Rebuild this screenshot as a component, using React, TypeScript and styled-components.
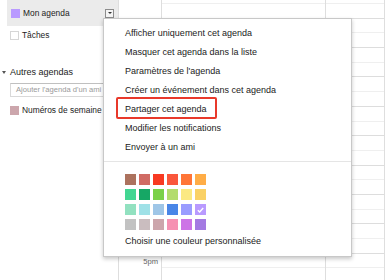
import React from "react";
import styled, {createGlobalStyle} from "styled-components";

const GlobalStyle = createGlobalStyle`
  html, body {
    margin: 0;
    padding: 0;
    background: #ffffff;
    font-family: "Liberation Sans", Arial, sans-serif;
    overflow: hidden;
  }
`;

const Page = styled.div`
  position: relative;
  display: flex;
  width: 385px;
  height: 280px;
  overflow: hidden;
  background: #ffffff;
`;

const Sidebar = styled.div`
  width: 118px;
  flex: none;
  display: flex;
  flex-direction: column;
`;

const CalendarRow = styled.div<{ $selected?: boolean; $gap?: number }>`
  display: flex;
  align-items: center;
  height: ${p => (p.$selected ? "26px" : "18px")};
  margin-top: ${p => p.$gap ?? 0}px;
  margin-left: 7px;
  padding-left: ${p => (p.$selected ? "4px" : "3px")};
  padding-right: 4px;
  background: ${p => (p.$selected ? "#ebebeb" : "transparent")};
`;

const ColorChip = styled.span<{ $color: string; $empty?: boolean }>`
  width: 9px;
  height: 9px;
  flex: none;
  box-sizing: border-box;
  background: ${p => p.$color};
  border: ${p => (p.$empty ? "1px solid #d6d6d6" : "none")};
`;

const CalendarLabel = styled.span`
  margin-left: 3px;
  font-size: 8.4px;
  color: #222;
  white-space: nowrap;
`;

const DropButton = styled.span`
  margin-left: auto;
  width: 9px;
  height: 9px;
  box-sizing: border-box;
  border: 1px solid #8c8c8c;
  background: #f4f4f4;
  display: flex;
  align-items: center;
  justify-content: center;

  &::after {
    content: "";
    border-left: 2px solid transparent;
    border-right: 2px solid transparent;
    border-top: 2px solid #333;
  }
`;

const SectionHeader = styled.div`
  display: flex;
  align-items: center;
  margin-top: 19px;
  height: 18px;
  padding-left: 2px;
  font-size: 9px;
  color: #222;

  &::before {
    content: "";
    margin-right: 4px;
    border-left: 2.5px solid transparent;
    border-right: 2.5px solid transparent;
    border-top: 3px solid #555;
  }
`;

const FriendInput = styled.div`
  margin: 2px 0 0 10px;
  height: 14px;
  width: 120px;
  box-sizing: border-box;
  border: 1px solid #d9d9d9;
  border-top-color: #c0c0c0;
  padding-left: 5px;
  font-size: 7.6px;
  line-height: 12px;
  color: #9a9a9a;
  white-space: nowrap;
  overflow: hidden;
`;

const Calendar = styled.div`
  flex: 1;
  display: flex;
  border-left: 1px solid #dedede;
`;

const TimeColumn = styled.div`
  width: 42px;
  flex: none;
  padding-top: 3px;
  border-right: 1px solid #dedede;
`;

const TimeSlot = styled.div`
  height: 14.7px;
  box-sizing: border-box;
  padding: 4px 3px 0 0;
  text-align: right;
  font-size: 7.6px;
  color: #666;
`;

const DayColumn = styled.div<{ $width?: number }>`
  width: ${p => (p.$width ? `${p.$width}px` : "auto")};
  flex: ${p => (p.$width ? "none" : "1")};
  padding-top: 3px;
  border-right: 1px solid #dedede;
`;

const Slot = styled.div<{ $hour: boolean }>`
  height: 14.7px;
  box-sizing: border-box;
  border-top: 1px solid ${p => (p.$hour ? "#dddddd" : "#efefef")};
`;

const Menu = styled.div`
  position: absolute;
  left: 103px;
  top: 18px;
  width: 249px;
  box-sizing: border-box;
  padding: 5px 0;
  background: #ffffff;
  border: 1px solid #c8c8c8;
  box-shadow: 0 2px 4px rgba(0, 0, 0, 0.22);
`;

const MenuItem = styled.div`
  position: relative;
  height: 19px;
  line-height: 19px;
  padding-left: 21px;
  font-size: 9px;
  color: #222;
  white-space: nowrap;
`;

const Highlight = styled.span`
  position: absolute;
  left: 12px;
  top: -3px;
  width: 101px;
  height: 22px;
  box-sizing: border-box;
  border: 2px solid #e8392b;
  border-radius: 2px;
`;

const Separator = styled.div`
  height: 1px;
  margin: 4px 0 0;
  background: #e5e5e5;
`;

const SwatchGrid = styled.div`
  display: grid;
  grid-template-columns: repeat(6, 11px);
  grid-auto-rows: 11px;
  column-gap: 3px;
  row-gap: 4px;
  margin: 12px 0 2px 21px;
`;

const Swatch = styled.div<{ $color: string }>`
  background: ${p => p.$color};
  display: flex;
  align-items: center;
  justify-content: center;
`;

const swatches = [
    "#ac725e", "#d06b64", "#f83a22", "#fa573c", "#ff7537", "#ffad46",
    "#42d692", "#16a765", "#7bd148", "#b3dc6c", "#fbe983", "#fad165",
    "#92e1c0", "#9fe1e7", "#9fc6e7", "#4986e7", "#9a9cff", "#b99aff",
    "#c2c2c2", "#cabdbf", "#cca6ac", "#f691b2", "#cd74e6", "#a47ae2",
];

const menuItems = [
    "Afficher uniquement cet agenda",
    "Masquer cet agenda dans la liste",
    "Paramètres de l'agenda",
    "Créer un événement dans cet agenda",
    "Partager cet agenda",
    "Modifier les notifications",
    "Envoyer à un ami",
];

// only the label below the open menu is visible
const timeLabels: Record<number, string> = {17: "5pm"};

export default function App() {
    const slots = [];
    for (let i = 0; i < 19; i++) {
        slots.push(i);
    }

    return (
        <Page>
            <GlobalStyle/>
            <Sidebar>
                <CalendarRow $selected>
                    <ColorChip $color="#b99aff"/>
                    <CalendarLabel>Mon agenda</CalendarLabel>
                    <DropButton/>
                </CalendarRow>
                <CalendarRow>
                    <ColorChip $color="#ffffff" $empty/>
                    <CalendarLabel>Tâches</CalendarLabel>
                </CalendarRow>
                <SectionHeader>Autres agendas</SectionHeader>
                <FriendInput>Ajouter l'agenda d'un ami</FriendInput>
                <CalendarRow $gap={4}>
                    <ColorChip $color="#cca6ac"/>
                    <CalendarLabel>Numéros de semaine</CalendarLabel>
                </CalendarRow>
            </Sidebar>
            <Calendar>
                <TimeColumn>
                    {slots.map(i => <TimeSlot key={i}>{timeLabels[i] ?? ""}</TimeSlot>)}
                </TimeColumn>
                <DayColumn $width={163}>
                    {slots.map(i => <Slot key={i} $hour={i % 2 === 1}/>)}
                </DayColumn>
                <DayColumn>
                    {slots.map(i => <Slot key={i} $hour={i % 2 === 1}/>)}
                </DayColumn>
            </Calendar>
            <Menu>
                {menuItems.map(label => (
                    <MenuItem key={label}>
                        {label === "Partager cet agenda" && <Highlight/>}
                        {label}
                    </MenuItem>
                ))}
                <Separator/>
                <SwatchGrid>
                    {swatches.map(color => (
                        <Swatch key={color} $color={color}>
                            {color === "#b99aff" && (
                                <svg width="7" height="6" viewBox="0 0 7 6">
                                    <path d="M0.8 3.2 L2.7 5 L6.2 1" fill="none" stroke="#fff" strokeWidth="1.4"/>
                                </svg>
                            )}
                        </Swatch>
                    ))}
                </SwatchGrid>
                <MenuItem>Choisir une couleur personnalisée</MenuItem>
            </Menu>
        </Page>
    );
}
